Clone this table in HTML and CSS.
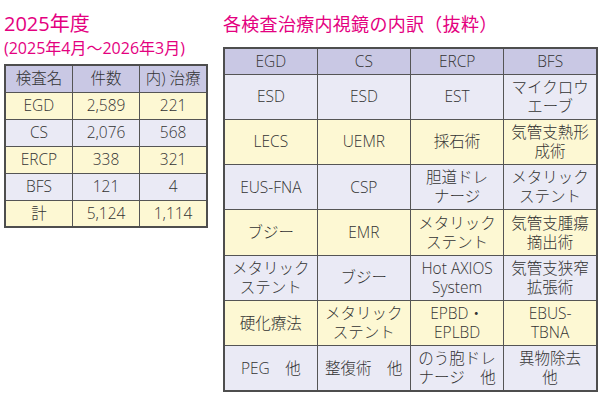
FILE: index.html
```html
<!DOCTYPE html>
<html lang="ja">
<head>
<meta charset="utf-8">
<link rel="stylesheet" href="styles.css">
</head>
<body>
<div class="page">
  <section class="left">
    <h1 class="title">2025年度</h1>
    <p class="period">(2025年4月～2026年3月)</p>
    <table class="tbl small">
      <tr class="head"><td>検査名</td><td>件数</td><td>内) 治療</td></tr>
      <tr class="y"><td>EGD</td><td>2,589</td><td>221</td></tr>
      <tr class="l"><td>CS</td><td>2,076</td><td>568</td></tr>
      <tr class="y"><td>ERCP</td><td>338</td><td>321</td></tr>
      <tr class="l"><td>BFS</td><td>121</td><td>4</td></tr>
      <tr class="y"><td>計</td><td>5,124</td><td>1,114</td></tr>
    </table>
  </section>
  <section class="right">
    <h2 class="title">各検査治療内視鏡の内訳（抜粋）</h2>
    <table class="tbl big">
      <tr class="head"><td>EGD</td><td>CS</td><td>ERCP</td><td>BFS</td></tr>
      <tr class="l"><td>ESD</td><td>ESD</td><td>EST</td><td>マイクロウ<br>エーブ</td></tr>
      <tr class="y"><td>LECS</td><td>UEMR</td><td>採石術</td><td>気管支熱形<br>成術</td></tr>
      <tr class="l"><td>EUS-FNA</td><td>CSP</td><td>胆道ドレ<br>ナージ</td><td>メタリック<br>ステント</td></tr>
      <tr class="y"><td>ブジー</td><td>EMR</td><td>メタリック<br>ステント</td><td>気管支腫瘍<br>摘出術</td></tr>
      <tr class="l"><td>メタリック<br>ステント</td><td>ブジー</td><td>Hot AXIOS<br>System</td><td>気管支狭窄<br>拡張術</td></tr>
      <tr class="y"><td>硬化療法</td><td>メタリック<br>ステント</td><td>EPBD・<br>EPLBD</td><td>EBUS-<br>TBNA</td></tr>
      <tr class="l"><td>PEG　他</td><td>整復術　他</td><td>のう胞ドレ<br>ナージ　他</td><td>異物除去<br>他</td></tr>
    </table>
  </section>
</div>
</body>
</html>
```

FILE: styles.css
```css
html, body {
  margin: 0;
  padding: 0;
  background: #ffffff;
}
body {
  font-family: "Open Sans", "Noto Sans CJK JP", sans-serif;
  font-weight: 300;
  color: #333333;
}
.page {
  display: flex;
  gap: 15px;
  padding: 12px 0 0 4px;
}
.left {
  width: 204px;
}
.right {
  width: 375px;
}
.title {
  margin: 0;
  font-weight: 400;
  color: #e4007f;
  line-height: 24px;
  white-space: nowrap;
}
.left .title {
  font-size: 20px;
}
.right .title {
  font-size: 18px;
  letter-spacing: 0.3px;
  margin-bottom: 11px;
}
.period {
  margin: 2px 0 6px 0;
  font-size: 16px;
  line-height: 20px;
  color: #e4007f;
  font-weight: 400;
  white-space: nowrap;
}
.tbl {
  border-collapse: collapse;
  border: 2px solid #4e4e4e;
  table-layout: fixed;
}
.tbl td {
  border: 1.5px solid #555555;
  text-align: center;
  vertical-align: middle;
  padding: 0;
  font-size: 15.5px;
  line-height: 19px;
  white-space: nowrap;
}
.small {
  width: 204px;
}
.small tr {
  height: 27px;
}
.big {
  width: 375px;
}
.big tr {
  height: 45.3px;
}
.big tr.head {
  height: 26px;
}
.head td {
  background: #c9c8e4;
}
.y td {
  background: #fdf8d3;
}
.l td {
  background: #eaeaf5;
}
```
